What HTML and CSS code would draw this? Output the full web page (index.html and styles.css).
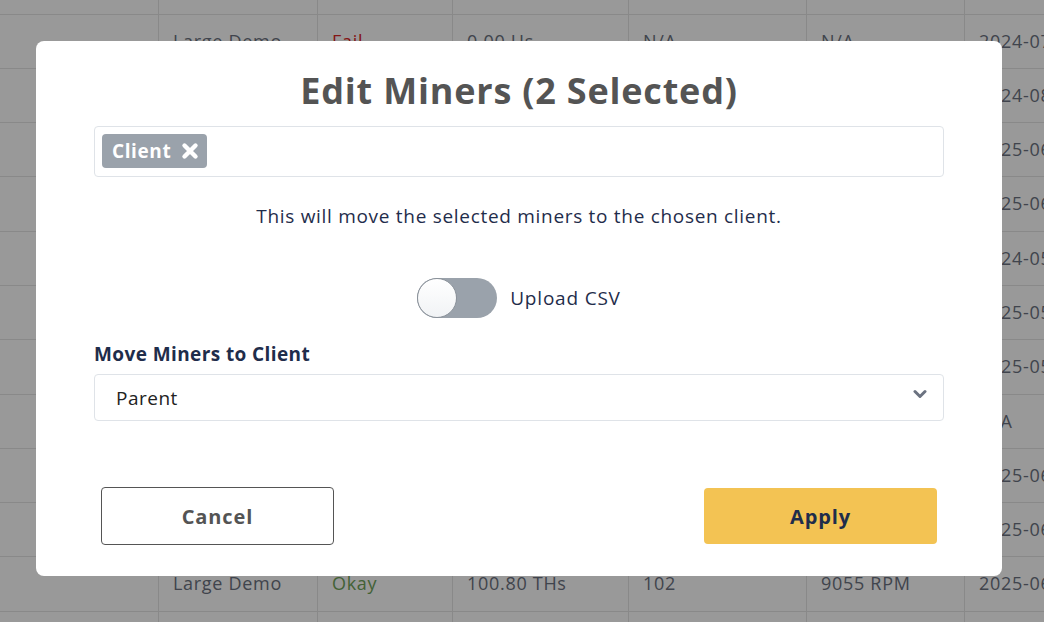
FILE: index.html
```html
<!DOCTYPE html>
<html lang="en">
<head>
    <meta charset="UTF-8">
    <meta name="viewport" content="width=device-width, initial-scale=1.0">
    <title>Edit Miners</title>
    <link rel="stylesheet" href="styles.css">
</head>
<body>
    <!-- miners table behind the modal -->
    <div class="miners-table">
        <div class="row row-top">
            <div class="cell"></div><div class="cell"></div><div class="cell"></div><div class="cell"></div><div class="cell"></div><div class="cell"></div><div class="cell"></div>
        </div>
        <div class="row">
            <div class="cell"></div><div class="cell">Large Demo</div><div class="cell fail">Fail</div><div class="cell">0.00 Hs</div><div class="cell">N/A</div><div class="cell">N/A</div><div class="cell">2024-07-12</div>
        </div>
        <div class="row">
            <div class="cell"></div><div class="cell">Large Demo</div><div class="cell ok">Okay</div><div class="cell">98.40 THs</div><div class="cell">99</div><div class="cell">8990 RPM</div><div class="cell">2024-08-02</div>
        </div>
        <div class="row">
            <div class="cell"></div><div class="cell">Large Demo</div><div class="cell ok">Okay</div><div class="cell">101.20 THs</div><div class="cell">101</div><div class="cell">9040 RPM</div><div class="cell">2025-06-11</div>
        </div>
        <div class="row">
            <div class="cell"></div><div class="cell">Large Demo</div><div class="cell ok">Okay</div><div class="cell">100.10 THs</div><div class="cell">100</div><div class="cell">9010 RPM</div><div class="cell">2025-06-11</div>
        </div>
        <div class="row">
            <div class="cell"></div><div class="cell">Large Demo</div><div class="cell ok">Okay</div><div class="cell">99.70 THs</div><div class="cell">98</div><div class="cell">8970 RPM</div><div class="cell">2024-05-20</div>
        </div>
        <div class="row">
            <div class="cell"></div><div class="cell">Large Demo</div><div class="cell ok">Okay</div><div class="cell">100.50 THs</div><div class="cell">101</div><div class="cell">9030 RPM</div><div class="cell">2025-05-28</div>
        </div>
        <div class="row">
            <div class="cell"></div><div class="cell">Large Demo</div><div class="cell ok">Okay</div><div class="cell">100.30 THs</div><div class="cell">100</div><div class="cell">9020 RPM</div><div class="cell">2025-05-28</div>
        </div>
        <div class="row">
            <div class="cell"></div><div class="cell">Large Demo</div><div class="cell fail">Fail</div><div class="cell">0.00 Hs</div><div class="cell">N/A</div><div class="cell">N/A</div><div class="cell">N/A</div>
        </div>
        <div class="row">
            <div class="cell"></div><div class="cell">Large Demo</div><div class="cell ok">Okay</div><div class="cell">100.60 THs</div><div class="cell">102</div><div class="cell">9050 RPM</div><div class="cell">2025-06-14</div>
        </div>
        <div class="row">
            <div class="cell"></div><div class="cell">Large Demo</div><div class="cell ok">Okay</div><div class="cell">100.70 THs</div><div class="cell">101</div><div class="cell">9060 RPM</div><div class="cell">2025-06-14</div>
        </div>
        <div class="row">
            <div class="cell"></div><div class="cell">Large Demo</div><div class="cell ok">Okay</div><div class="cell">100.80 THs</div><div class="cell">102</div><div class="cell">9055 RPM</div><div class="cell">2025-06-14</div>
        </div>
        <div class="row">
            <div class="cell"></div><div class="cell"></div><div class="cell"></div><div class="cell"></div><div class="cell"></div><div class="cell"></div><div class="cell"></div>
        </div>
    </div>

    <div class="overlay">
        <div class="modal">
            <h1 class="modal-title">Edit Miners (2 Selected)</h1>

            <div class="multi-select">
                <span class="chip">Client
                    <svg class="chip-x" width="18" height="18" viewBox="0 0 18 18">
                        <path d="M3.5 3.5 L14.5 14.5 M14.5 3.5 L3.5 14.5" stroke="#fff" stroke-width="4.4" stroke-linecap="round"/>
                    </svg>
                </span>
            </div>

            <p class="hint">This will move the selected miners to the chosen client.</p>

            <div class="toggle-row">
                <span class="toggle"><span class="knob"></span></span>
                <span class="toggle-label">Upload CSV</span>
            </div>

            <label class="field-label">Move Miners to Client</label>
            <div class="select">
                <span>Parent</span>
                <svg class="chevron" width="14" height="10" viewBox="0 0 14 10">
                    <path d="M2 2.5 L7 7.5 L12 2.5" fill="none" stroke="#6b7280" stroke-width="3" stroke-linecap="round" stroke-linejoin="round"/>
                </svg>
            </div>

            <div class="buttons">
                <button class="btn btn-cancel">Cancel</button>
                <button class="btn btn-apply">Apply</button>
            </div>
        </div>
    </div>
</body>
</html>
```

FILE: styles.css
```css
body {
    margin: 0;
    font-family: "Open Sans", Lato, sans-serif;
    background: #ffffff;
    overflow: hidden;
    height: 622px;
}
.miners-table {
    width: 1044px;
    height: 622px;
    overflow: hidden;
}
.row {
    display: grid;
    grid-template-columns: 159px 159px 135px 176px 178px 158px 200px;
    height: 54.3px;
    box-sizing: border-box;
    border-bottom: 1px solid #e5e5e5;
}
.row-top {
    height: 14.5px;
}
.cell {
    border-right: 1px solid #e5e5e5;
    padding: 14px 14px 0 14px;
    color: #6b7280;
    font-size: 18px;
    letter-spacing: 0.7px;
    white-space: nowrap;
    overflow: hidden;
}
.cell.fail {
    color: #dc2626;
}
.cell.ok {
    color: #6fa35a;
}
.overlay {
    position: fixed;
    inset: 0;
    background: rgba(0, 0, 0, 0.4);
    display: flex;
    align-items: flex-start;
    justify-content: center;
}
.modal {
    margin-top: 41px;
    margin-left: -6px;
    width: 966px;
    height: 535px;
    box-sizing: border-box;
    background: #ffffff;
    border-radius: 8px;
    padding: 26px 58px 0 58px;
    display: flex;
    flex-direction: column;
}
.modal-title {
    margin: 0;
    text-align: center;
    font-size: 36px;
    font-weight: 700;
    letter-spacing: 0.8px;
    color: #545454;
    line-height: 47px;
}
.multi-select {
    margin-top: 12px;
    height: 51px;
    box-sizing: border-box;
    border: 1px solid #dfe3e8;
    border-radius: 4px;
    padding: 7px;
    display: flex;
}
.chip {
    display: inline-flex;
    align-items: center;
    gap: 10px;
    background: #9aa2ab;
    color: #ffffff;
    font-weight: 700;
    font-size: 19px;
    letter-spacing: 0.6px;
    border-radius: 4px;
    padding: 0 8px 0 10px;
    height: 34px;
}
.hint {
    margin: 26px 0 0 0;
    text-align: center;
    font-size: 19px;
    letter-spacing: 0.7px;
    color: #1f2d4b;
    line-height: 26px;
}
.toggle-row {
    margin-top: 49px;
    display: flex;
    justify-content: center;
    align-items: center;
    gap: 13px;
}
.toggle {
    width: 80px;
    height: 40px;
    border-radius: 20px;
    background: #9aa2ab;
    display: flex;
    align-items: center;
}
.knob {
    width: 40px;
    height: 40px;
    box-sizing: border-box;
    border-radius: 50%;
    border: 1px solid #8b929a;
    background: linear-gradient(#ffffff, #f1f3f5);
}
.toggle-label {
    font-size: 19px;
    letter-spacing: 0.8px;
    color: #1f2d4b;
}
.field-label {
    margin-top: 23px;
    font-size: 19px;
    font-weight: 700;
    letter-spacing: 0.4px;
    color: #1f2d4b;
    line-height: 26px;
}
.select {
    margin-top: 7px;
    height: 47px;
    box-sizing: border-box;
    border: 1px solid #dfe3e8;
    border-radius: 4px;
    padding: 0 16px 0 21px;
    display: flex;
    align-items: center;
    justify-content: space-between;
    font-size: 19px;
    letter-spacing: 0.5px;
    color: #222222;
}
.chevron {
    margin-top: -8px;
}
.buttons {
    margin-top: 66px;
    padding: 0 7px;
    display: flex;
    justify-content: space-between;
    align-items: center;
}
.btn {
    width: 233px;
    font-family: "Open Sans", Lato, sans-serif;
    font-size: 20px;
    font-weight: 700;
    letter-spacing: 0.9px;
    border-radius: 4px;
    cursor: pointer;
}
.btn-cancel {
    height: 58px;
    background: #ffffff;
    border: 1px solid #555555;
    color: #545454;
}
.btn-apply {
    height: 56px;
    background: #f3c353;
    border: none;
    color: #1f2d4b;
}
```
